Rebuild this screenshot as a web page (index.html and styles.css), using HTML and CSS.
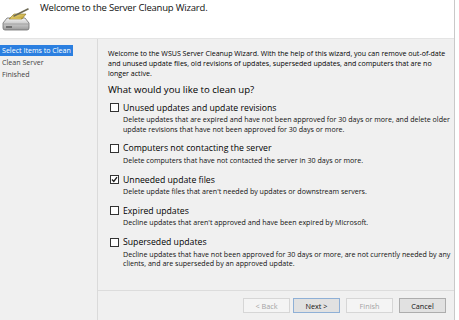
FILE: index.html
```html
<!DOCTYPE html>
<html>
<head>
<meta charset="utf-8">
<link rel="stylesheet" href="styles.css">
</head>
<body>
<div class="window">
  <header class="header">
    <svg class="logo" width="30" height="28" viewBox="0 0 30 28">
      <defs>
        <linearGradient id="drv" x1="0" y1="0" x2="0" y2="1">
          <stop offset="0" stop-color="#f4f4f4"/>
          <stop offset="1" stop-color="#9a9a9a"/>
        </linearGradient>
        <linearGradient id="brm" x1="0" y1="0" x2="1" y2="1">
          <stop offset="0" stop-color="#f3e08a"/>
          <stop offset="1" stop-color="#b89a2a"/>
        </linearGradient>
      </defs>
      <path d="M6 13 L24 13 L28 18 L28 23 Q28 25 26 25 L4 25 Q2 25 2 23 L2 18 Z" fill="url(#drv)" stroke="#6f6f6f" stroke-width="0.8"/>
      <path d="M2.5 19 L27.5 19" stroke="#8a8a8a" stroke-width="0.6"/>
      <rect x="5" y="21" width="6" height="2" fill="#707070"/>
      <path d="M8 14 L13 9 L25 9 L21 14 Z" fill="url(#brm)" stroke="#8a7420" stroke-width="0.6"/>
      <path d="M13 11 L27 4" stroke="#6e6a55" stroke-width="1.6" stroke-linecap="round"/>
      <path d="M10 13.5 L20 13.5" stroke="#d9c25a" stroke-width="0.8"/>
    </svg>
    <h1 class="title">Welcome to the Server Cleanup Wizard.</h1>
  </header>
  <div class="main">
    <nav class="sidebar">
      <div class="step active">Select Items to Clean</div>
      <div class="step">Clean Server</div>
      <div class="step">Finished</div>
    </nav>
    <section class="content">
      <div class="body">
        <p class="intro">Welcome to the WSUS Server Cleanup Wizard. With the help of this wizard, you can remove out-of-date<br>and unused update files, old revisions of updates, superseded updates, and computers that are no<br>longer active.</p>
        <h2 class="question">What would you like to clean up?</h2>
        <div class="option">
          <div class="label"><span class="box"></span>Unused updates and update revisions</div>
          <p class="desc">Delete updates that are expired and have not been approved for 30 days or more, and delete older<br>update revisions that have not been approved for 30 days or more.</p>
        </div>
        <div class="option">
          <div class="label"><span class="box"></span>Computers not contacting the server</div>
          <p class="desc">Delete computers that have not contacted the server in 30 days or more.</p>
        </div>
        <div class="option">
          <div class="label"><span class="box checked"><svg width="7" height="7" viewBox="0 0 7 7"><path d="M1 3.6 L2.8 5.4 L6 1.2" fill="none" stroke="#222" stroke-width="1.4"/></svg></span>Unneeded update files</div>
          <p class="desc">Delete update files that aren't needed by updates or downstream servers.</p>
        </div>
        <div class="option">
          <div class="label"><span class="box"></span>Expired updates</div>
          <p class="desc">Decline updates that aren't approved and have been expired by Microsoft.</p>
        </div>
        <div class="option">
          <div class="label"><span class="box"></span>Superseded updates</div>
          <p class="desc">Decline updates that have not been approved for 30 days or more, are not currently needed by any<br>clients, and are superseded by an approved update.</p>
        </div>
      </div>
      <footer class="footer">
        <button class="btn disabled">&lt; Back</button>
        <button class="btn default next">Next &gt;</button>
        <button class="btn disabled">Finish</button>
        <button class="btn">Cancel</button>
      </footer>
    </section>
  </div>
</div>
</body>
</html>
```
FILE: styles.css
```css
* { box-sizing: border-box; }
html, body { margin: 0; padding: 0; }
body {
  background: #ffffff;
  font-family: "Open Sans", "Noto Sans", sans-serif;
  color: #000;
  width: 459px;
  height: 320px;
  overflow: hidden;
}
.window {
  width: 455px;
  height: 320px;
  border-right: 1px solid #c9c9c9;
  background: #f0f0f0;
  display: flex;
  flex-direction: column;
}
.header {
  height: 39px;
  background: #fff;
  border-bottom: 1px solid #e4e4e4;
  display: flex;
  align-items: flex-start;
  flex-shrink: 0;
}
.logo {
  margin: 5px 0 0 1px;
  flex-shrink: 0;
}
.title {
  margin: 1px 0 0 9px;
  font-size: 9.5px;
  letter-spacing: -0.2px;
  font-weight: normal;
  line-height: 14px;
  color: #111;
  white-space: nowrap;
}
.main {
  flex: 1;
  display: flex;
  min-height: 0;
}
.sidebar {
  width: 98px;
  flex-shrink: 0;
  border-right: 1px solid #dadada;
  padding-top: 6px;
  font-size: 7.1px;
}
.step {
  height: 12px;
  line-height: 11px;
  padding-left: 2px;
  color: #444;
  white-space: nowrap;
}
.step.active {
  background: #2b7fe0;
  color: #fff;
  width: 73px;
  height: 11px;
  margin-bottom: 1px;
}
.content {
  flex: 1;
  display: flex;
  flex-direction: column;
  min-width: 0;
}
.body {
  flex: 1;
  padding: 9px 0 0 10px;
}
.intro {
  margin: 0;
  font-size: 7.05px;
  line-height: 10px;
  white-space: nowrap;
}
.question {
  margin: 5px 0 0 0;
  font-size: 9.6px;
  font-weight: normal;
  line-height: 13px;
}
.option {
  margin-top: 5.5px;
  margin-bottom: 0;
}
.option + .option { margin-top: 8.3px; }
.label {
  display: flex;
  align-items: center;
  font-size: 8.7px;
  line-height: 12px;
  margin-left: 2px;
  white-space: nowrap;
}
.box {
  width: 9px;
  height: 9px;
  border: 1px solid #333;
  background: #fff;
  margin-right: 4px;
  display: flex;
  align-items: center;
  justify-content: center;
  flex-shrink: 0;
}
.desc {
  margin: 1.5px 0 0 15px;
  font-size: 7.1px;
  line-height: 9.5px;
  white-space: nowrap;
  color: #111;
}
.footer {
  height: 30px;
  border-top: 1px solid #dcdcdc;
  display: flex;
  justify-content: flex-end;
  align-items: flex-start;
  padding: 7px 8px 0 0;
}
.btn {
  width: 47px;
  height: 15px;
  margin-left: 6px;
  padding: 0;
  font-family: inherit;
  font-size: 7.3px;
  color: #111;
  background: #e1e1e1;
  border: 1px solid #adadad;
}
.btn.next { margin-left: 3px; }
.btn.default { border-color: #8fb0d6; }
.btn.disabled {
  background: #f4f4f4;
  border-color: #d6d6d6;
  color: #a3a3a3;
}
```
